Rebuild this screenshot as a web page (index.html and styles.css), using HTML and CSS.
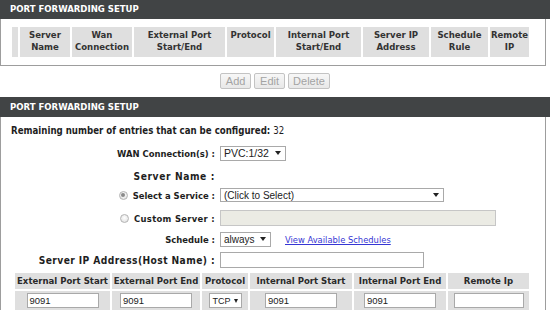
FILE: index.html
```html
<!DOCTYPE html>
<html>
<head>
<meta charset="utf-8">
<title>Port Forwarding Setup</title>
<link rel="stylesheet" href="styles.css">
</head>
<body>
<div class="hdr hdr-top">PORT FORWARDING SETUP</div>
<div class="box box-list">
  <div class="list-grid">
    <div class="lh"></div>
    <div class="lh">Server<br>Name</div>
    <div class="lh">Wan<br>Connection</div>
    <div class="lh">External Port<br>Start/End</div>
    <div class="lh">Protocol</div>
    <div class="lh">Internal Port<br>Start/End</div>
    <div class="lh">Server IP<br>Address</div>
    <div class="lh">Schedule<br>Rule</div>
    <div class="lh">Remote<br>IP</div>
  </div>
</div>
<div class="btns">
  <span class="btn">Add</span>
  <span class="btn">Edit</span>
  <span class="btn">Delete</span>
</div>
<div class="hdr">PORT FORWARDING SETUP</div>
<div class="box box-form">
  <div class="remaining">Remaining number of entries that can be configured: <span class="reg">32</span></div>
  <div class="form">
    <div class="lbl">WAN Connection(s) :</div>
    <div class="ctl"><span class="sel sel-pvc"><span>PVC:1/32</span><span class="arrow"></span></span></div>

    <div class="lbl lbl-sn">Server Name :</div>
    <div class="ctl"></div>

    <div class="lbl"><span class="radio on"></span><span>Select a Service :</span></div>
    <div class="ctl"><span class="sel sel-svc"><span>(Click to Select)</span><span class="arrow"></span></span></div>

    <div class="lbl lbl-cs"><span class="radio"></span><span>Custom Server :</span></div>
    <div class="ctl"><span class="txt txt-custom"></span></div>

    <div class="lbl">Schedule :</div>
    <div class="ctl"><span class="sel sel-sched"><span>always</span><span class="arrow"></span></span><a class="link" href="#">View Available Schedules</a></div>

    <div class="lbl lbl-ip">Server IP Address(Host Name) :</div>
    <div class="ctl"><span class="txt txt-ip"></span></div>
  </div>
  <div class="ports">
    <div class="ph">External Port Start</div>
    <div class="ph">External Port End</div>
    <div class="ph">Protocol</div>
    <div class="ph">Internal Port Start</div>
    <div class="ph">Internal Port End</div>
    <div class="ph">Remote Ip</div>

    <div class="pd"><span class="txt txt-port">9091</span></div>
    <div class="pd"><span class="txt txt-port">9091</span></div>
    <div class="pd"><span class="sel sel-proto"><span>TCP</span><span class="arrow"></span></span></div>
    <div class="pd"><span class="txt txt-port">9091</span></div>
    <div class="pd"><span class="txt txt-port">9091</span></div>
    <div class="pd"><span class="txt txt-remote"></span></div>
  </div>
</div>
</body>
</html>
```

FILE: styles.css
```css
body {
  margin: 0;
  background: #fff;
  color: #1e1e1e;
  font-family: "DejaVu Sans Condensed", "DejaVu Sans", sans-serif;
  font-stretch: condensed;
}

.hdr {
  width: 550px;
  box-sizing: border-box;
  height: 20px;
  line-height: 20px;
  padding-left: 10px;
  background: #414445;
  color: #fff;
  font-weight: bold;
  font-size: 9.5px;
}

.hdr-top {
  height: 19px;
  line-height: 18px;
}

.box {
  width: 546px;
  box-sizing: border-box;
  border: 1px solid #9d9d9d;
  border-top: none;
}

.box-list {
  padding: 8px 0 8px 11px;
}

.list-grid {
  display: grid;
  grid-template-columns: 6px 50px 60px 91px 47px 85px 66px 57px 39px;
  column-gap: 2px;
  height: 30px;
}

.lh {
  background: #dfdfdf;
  color: #333;
  font-weight: bold;
  font-size: 9.5px;
  line-height: 12px;
  text-align: center;
  padding-top: 2px;
}

.btns {
  width: 550px;
  display: flex;
  justify-content: center;
  gap: 3px;
  margin: 7px 0 8px;
}

.btn {
  height: 16px;
  min-width: 31px;
  box-sizing: border-box;
  padding: 0 4px;
  border: 1px solid #c3c3c3;
  border-radius: 2px;
  background: linear-gradient(#f7f7f7, #e8e8e8);
  color: #a3a3a3;
  font-family: "Liberation Sans", Arial, sans-serif;
  font-size: 11px;
  line-height: 14px;
  text-align: center;
}

.box-form {
  padding: 6px 0 12px;
}

.remaining {
  padding-left: 10px;
  height: 16px;
  line-height: 16px;
  font-weight: bold;
  font-size: 9.6px;
}

.reg {
  font-weight: normal;
}

.form {
  display: grid;
  grid-template-columns: 214px 1fr;
  grid-template-rows: 28px 18px 20px 26px 16px 26px;
  column-gap: 5px;
  align-items: center;
}

.lbl {
  display: flex;
  justify-content: flex-end;
  align-items: center;
  gap: 5px;
  font-weight: bold;
  font-size: 9.4px;
  white-space: nowrap;
}

.lbl-sn {
  font-size: 10.2px;
  letter-spacing: 0.6px;
}

.lbl-cs {
  letter-spacing: 0.3px;
}

.lbl-ip {
  font-size: 10.2px;
  letter-spacing: 0.4px;
}

.ctl {
  display: flex;
  align-items: center;
  gap: 14px;
}

.radio {
  width: 9px;
  height: 9px;
  box-sizing: border-box;
  border-radius: 50%;
  border: 1px solid #b4b4b4;
  background: radial-gradient(circle at 50% 40%, #ffffff, #dcdcdc);
  display: flex;
  align-items: center;
  justify-content: center;
}

.radio.on::after {
  content: "";
  width: 4px;
  height: 4px;
  border-radius: 50%;
  background: #8a8a8a;
}

.sel {
  display: inline-flex;
  align-items: center;
  justify-content: space-between;
  height: 15px;
  box-sizing: border-box;
  padding: 0 4px 0 3px;
  border: 1px solid #a9a9a9;
  background: #fff;
  color: #222;
  font-family: "Liberation Sans", Arial, sans-serif;
  font-size: 10.5px;
}

.sel-pvc { width: 66px; }
.sel-svc { width: 224px; height: 14px; font-size: 10px; }
.sel-sched { width: 51px; font-size: 10px; }
.sel-proto { width: 33px; height: 15px; padding: 0 3px; font-size: 9px; }

.arrow {
  width: 0;
  height: 0;
  border-left: 3px solid transparent;
  border-right: 3px solid transparent;
  border-top: 4px solid #222;
}

.sel-proto .arrow {
  border-left-width: 2.5px;
  border-right-width: 2.5px;
}

.txt {
  display: inline-block;
  height: 16px;
  box-sizing: border-box;
  border: 1px solid #a9a9a9;
  background: #fff;
  color: #222;
  font-family: "Liberation Sans", Arial, sans-serif;
  font-size: 10px;
  line-height: 14px;
  padding-left: 2px;
}

.txt-custom {
  width: 276px;
  background: #ebebe4;
  border-color: #c6c6c6;
}

.txt-ip { width: 204px; }

.link {
  color: #3636d4;
  text-decoration: underline;
  font-size: 9.3px;
}

.ports {
  display: grid;
  grid-template-columns: 95px 88px 46px 102px 92px 81px;
  grid-template-rows: 16px 19px;
  gap: 2px;
  margin-left: 14px;
}

.ph {
  background: #dfdfdf;
  color: #2a2a2a;
  font-weight: bold;
  font-size: 9.5px;
  line-height: 16px;
  text-align: center;
  white-space: nowrap;
}

.pd {
  background: #dfdfdf;
  display: flex;
  align-items: center;
  justify-content: center;
}

.txt-port { width: 72px; height: 15px; font-size: 9.5px; }
.txt-remote { width: 70px; height: 15px; }
```
